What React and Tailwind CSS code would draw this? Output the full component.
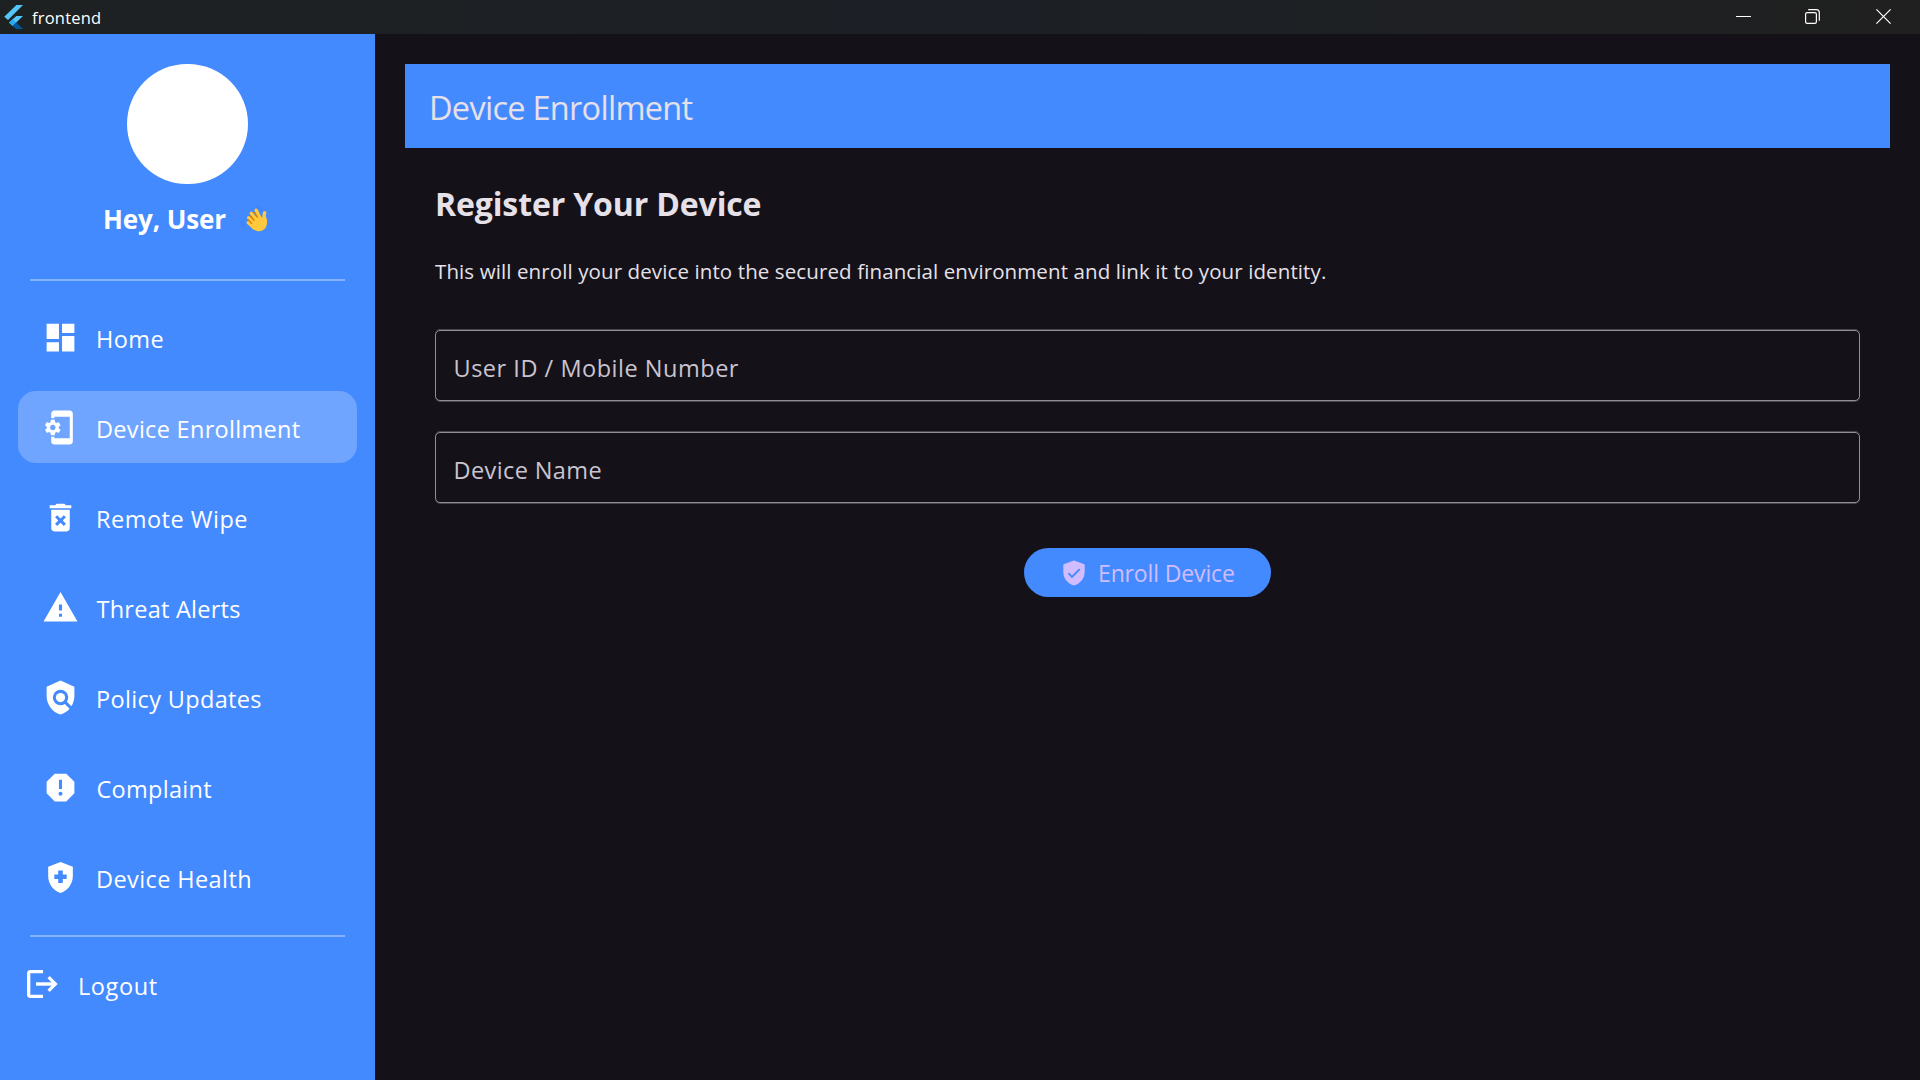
import React from "react";
import {
  MdDashboard,
  MdPhonelinkSetup,
  MdDeleteForever,
  MdWarning,
  MdPolicy,
  MdReport,
  MdHealthAndSafety,
} from "react-icons/md";

const NAV = [
  { label: "Home", Icon: MdDashboard, text: "tracking-[0.4px]" },
  { label: "Device Enrollment", Icon: MdPhonelinkSetup, text: "tracking-[0.3px]", active: true },
  { label: "Remote Wipe", Icon: MdDeleteForever, text: "tracking-[0.5px]" },
  { label: "Threat Alerts", Icon: MdWarning, text: "tracking-[0.25px] ml-[0.5px]" },
  { label: "Policy Updates", Icon: MdPolicy, text: "tracking-[0.35px]" },
  { label: "Complaint", Icon: MdReport, text: "tracking-[0.3px] ml-[0.5px]" },
  { label: "Device Health", Icon: MdHealthAndSafety, text: "tracking-[0.4px]" },
];

function FlutterLogo() {
  return (
    <svg width="19" height="24" viewBox="0 0 19 24" className="block">
      <path d="M12.4 0H19L4 15 .2 11.8z" fill="#54c5f8" />
      <path d="M12.4 11H19L8.6 21 5 17.6z" fill="#54c5f8" />
      <path d="M5 17.6 8.6 14.2 12.3 17.6 8.6 21z" fill="#29a9ee" />
      <path d="M8.6 21 12.3 17.6 19 24H12.2z" fill="#01579b" />
    </svg>
  );
}

function WavingHand() {
  return (
    <svg width="30" height="30" viewBox="0 0 30 30" className="block">
      <g fill="none" stroke="#3b7ff5" strokeWidth="1" strokeLinecap="round">
        <path d="M15.5 2.6C18 .9 21.5 2.2 22 5.6" />
        <path d="M16.5 4.6C18.4 3.4 20 4.3 20.4 6" />
        <path d="M1.2 17.5C.6 20.5 2.4 23 5 23.2" />
        <path d="M3.4 17.2C3 19.3 4 20.8 5.6 21.2" />
      </g>
      <g stroke="#ffc83d" strokeLinecap="round" fill="none">
        <path d="M8.2 18.6 14 24" strokeWidth="3.2" />
        <path d="M8.6 13.6 14.5 20" strokeWidth="3.2" />
        <path d="M11.4 9.4 17 17" strokeWidth="3.4" />
        <path d="M16.2 6.2 20 14.5" strokeWidth="3.4" />
        <path d="M24.7 8.8C23.4 11.5 24.2 14 25 17" strokeWidth="3.4" />
      </g>
      <path
        d="M8 19.5 13 12.5 19.5 11.5 22.6 13.6 26.2 13.5C27.6 17.5 27.2 21.8 25 24.4 22 27.8 17.4 28 14 25.4z"
        fill="#ffc83d"
      />
      <path
        d="M8.4 16 11.6 19.4M10.5 12 14 16.4M14.6 8.6 17.4 13.2"
        stroke="#d67d00"
        strokeWidth="1.3"
        strokeLinecap="round"
        fill="none"
      />
    </svg>
  );
}

function LogoutIcon() {
  return (
    <svg width="38" height="38" viewBox="0 0 38 38" fill="none" stroke="currentColor" className="block shrink-0">
      <path d="M21 6.7H8.2Q6.7 6.7 6.7 8.2V29.8Q6.7 31.3 8.2 31.3H21" strokeWidth="3.3" />
      <path d="M14 19H33" strokeWidth="3.4" />
      <path d="M26.6 12.2 33.4 19 26.6 25.8" strokeWidth="3.2" />
    </svg>
  );
}

function ShieldCheckIcon() {
  return (
    <svg width="30" height="30" viewBox="0 0 30 30" className="block shrink-0">
      <path
        d="M14.2 2.7Q15 2.2 15.8 2.7L24.6 6Q25.7 6.4 25.7 7.5V13.8C25.7 20.3 21.4 25.8 15 27.5 8.6 25.8 4.3 20.3 4.3 13.8V7.5Q4.3 6.4 5.4 6z"
        fill="currentColor"
      />
      <path d="M9.4 15.2 13 18.8 20.7 11.1" fill="none" stroke="#448aff" strokeWidth="1.9" />
    </svg>
  );
}

function TitleBar() {
  return (
    <header className="flex h-[34px] shrink-0 items-center justify-between bg-gradient-to-r from-[#1e2122] via-[#1c2026] to-[#202020] pl-1 pr-[29px] text-white">
      <div className="flex items-center gap-[9px]">
        <FlutterLogo />
        <span className="pt-px text-[16.5px] leading-[33px] tracking-[0.2px]">frontend</span>
      </div>
      <div className="flex items-center gap-[54px] pb-px">
        <svg width="15" height="15" viewBox="0 0 15 15" className="block">
          <path d="M0 7.5H15" stroke="#fff" strokeWidth="1" />
        </svg>
        <svg width="15" height="15" viewBox="0 0 15 15" fill="none" stroke="#fff" strokeWidth="1.2" className="block">
          <rect x=".6" y="3.6" width="10.8" height="10.8" rx="1.6" />
          <path d="M3.2.7H11.4C13.2.7 14.3 1.8 14.3 3.6V11.8" />
        </svg>
        <svg width="15" height="15" viewBox="0 0 15 15" className="ml-[2px] block">
          <path d="M.4.4 14.6 14.6M14.6.4.4 14.6" stroke="#fff" strokeWidth="1.2" />
        </svg>
      </div>
    </header>
  );
}

function Sidebar() {
  return (
    <aside className="flex w-[375px] shrink-0 flex-col bg-[#448aff] text-white">
      <div className="ml-[127px] mt-[30px] h-[120px] w-[121px] rounded-full bg-white" />
      <div className="mt-[15px] flex h-10 items-center pl-[103px]">
        <span className="w-[137px] text-[26px] font-bold leading-10 tracking-[-0.1px]">Hey, User</span>
        <WavingHand />
      </div>
      <div className="mx-[30px] mt-10 h-[2px] bg-[#84b2ff]" />
      <nav className="mt-5 flex flex-col gap-[18px]">
        {NAV.map(({ label, Icon, text, active }) => (
          <a
            key={label}
            className={
              "mx-[18px] flex h-[72px] items-center rounded-[18px] pl-6 " +
              (active ? "bg-[#70a5ff]" : "")
            }
          >
            <Icon className="size-[37px] shrink-0" />
            <span className="pl-[17px] pt-1 text-[23.5px] leading-8">
              <span className={text}>{label}</span>
            </span>
          </a>
        ))}
      </nav>
      <div className="mx-[30px] mt-[22px] h-[2px] bg-[#84b2ff]" />
      <a className="mt-[11px] flex h-[72px] items-center pl-[22px]">
        <LogoutIcon />
        <span className="pl-[18px] pt-1 text-[23.5px] leading-8 tracking-[0.6px]">Logout</span>
      </a>
    </aside>
  );
}

function Field({ label, className }) {
  return (
    <div className="flex h-[71px] items-center rounded-[5px] border border-[#938f99] pl-[17.5px] text-[23.5px] text-[#cac4d0] shadow-[0_-1px_0_#47444c,0_1px_0_#47444c]">
      <span className={"pt-1 leading-8 " + className}>{label}</span>
    </div>
  );
}

export default function App() {
  return (
    <div className="flex h-screen w-full flex-col overflow-hidden bg-[#141218] font-['Open_Sans','Noto_Sans',sans-serif]">
      <TitleBar />
      <div className="flex min-h-0 flex-1">
        <Sidebar />
        <main className="flex-1 p-[30px] text-[#e6e0e9]">
          <div className="h-[84px] bg-[#448aff] pl-6 text-[32.5px] leading-[87px] tracking-[-0.72px]">
            Device Enrollment
          </div>
          <section className="flex flex-col px-[30px]">
            <h1 className="mt-8 text-[32px] font-bold leading-[48px] tracking-[-0.13px]">
              Register Your Device
            </h1>
            <p className="mt-7 text-[20.5px] leading-[30px] tracking-[0.108px]">
              This will enroll your device into the secured financial environment and link it to your identity.
            </p>
            <div className="mt-11 flex flex-col gap-[31px]">
              <Field label="User ID / Mobile Number" className="tracking-[0.52px]" />
              <Field label="Device Name" className="tracking-[0.4px]" />
            </div>
            <button className="mt-[45px] flex h-[49px] w-[247px] items-center self-center rounded-full bg-[#448aff] pl-[34.5px] text-[#d0bcff]">
              <ShieldCheckIcon />
              <span className="pl-[9.5px] text-[23px] leading-8 tracking-[-0.14px]">Enroll Device</span>
            </button>
          </section>
        </main>
      </div>
    </div>
  );
}
